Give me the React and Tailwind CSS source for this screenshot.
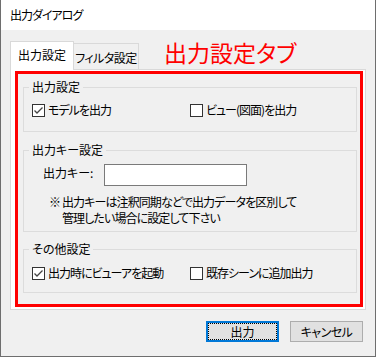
import React from "react";

function CheckBox({ checked, label, className = "" }) {
  return (
    <div className={"flex items-center h-[16px] " + className}>
      <span className="w-[13px] h-[13px] border border-[#333333] bg-white flex items-center justify-center shrink-0">
        {checked && (
          <svg width="11" height="11" viewBox="0 0 11 11">
            <polyline points="1.5,5.5 4,8 9.5,2.5" fill="none" stroke="#444444" strokeWidth="1.3" />
          </svg>
        )}
      </span>
      <span className="ml-[3px] whitespace-nowrap tracking-[-1px]">{label}</span>
    </div>
  );
}

function Group({ title, className = "", children }) {
  return (
    <fieldset className={"border border-[#dcdcdc] w-[334px] ml-[5px] " + className}>
      <legend className="ml-[5px] px-[3px] leading-[16px]">{title}</legend>
      {children}
    </fieldset>
  );
}

export default function App() {
  return (
    <div className="w-[377px] h-[357px] bg-white overflow-hidden font-['Noto_Sans_CJK_JP',sans-serif] [font-feature-settings:'palt'] text-[12px] text-black">
      <div className="w-[376px] h-[357px] border-l border-r border-b border-[#6e6e6e] flex flex-col">
        {/* タイトルバー */}
        <div className="h-[30px] bg-white pl-[9px] flex items-center shrink-0">
          <span className="tracking-[-1px]">出力ダイアログ</span>
        </div>

        {/* 本体 */}
        <div className="flex-1 bg-[#f0f0f0] pl-[9px] flex flex-col">
          {/* タブ */}
          <div className="mt-[11px] h-[29px] flex items-end">
            <div className="relative z-10 w-[64px] h-[29px] bg-white border-t border-l border-r border-[#d9d9d9] flex items-center justify-center pb-[3px]">
              出力設定
            </div>
            <div className="w-[65px] h-[26px] mb-[1px] bg-[#f0f0f0] border-t border-r border-[#d9d9d9] flex items-center justify-center pt-[2px] whitespace-nowrap tracking-[-0.5px]">
              フィルタ設定
            </div>
            <div className="ml-[25px] self-start -mt-[3px] h-[28px] leading-[28px] text-[23px] text-[#ff0000] whitespace-nowrap">
              出力設定タブ
            </div>
          </div>

          {/* タブページ */}
          <div className="-mt-px w-[356px] h-[241px] bg-white border border-[#d9d9d9]">
            <div className="mt-[1px] ml-[4px] w-[348px] h-[236px] border-[3px] border-[#ff0000] bg-[#f0f0f0]">
              <Group title="出力設定" className="mt-[5px]">
                <div className="pl-[8px] pt-[7px] pb-[13px] flex">
                  <CheckBox checked label="モデルを出力" className="w-[158px]" />
                  <CheckBox label="ビュー(図面)を出力" />
                </div>
              </Group>

              <Group title="出力キー設定" className="mt-[10px]">
                <div className="pl-[8px] pt-[6px] pb-[5px]">
                  <div className="flex items-center">
                    <span className="ml-[11px] w-[61px] mb-[4px] whitespace-nowrap">出力キー:</span>
                    <div className="w-[143px] h-[22px] border border-[#7a7a7a] bg-white" />
                  </div>
                  <div className="mt-[8px] ml-[17px] flex leading-[16px]">
                    <span className="w-[13px] shrink-0">※</span>
                    <div className="whitespace-nowrap tracking-[-0.9px]">
                      <div>出力キーは注釈同期などで出力データを区別して</div>
                      <div>管理したい場合に設定して下さい</div>
                    </div>
                  </div>
                </div>
              </Group>

              <Group title="その他設定" className="mt-[9px]">
                <div className="pl-[8px] pt-[8px] pb-[11px] flex">
                  <CheckBox checked label="出力時にビューアを起動" className="w-[158px]" />
                  <CheckBox label="既存シーンに追加出力" />
                </div>
              </Group>
            </div>
          </div>

          {/* ボタン */}
          <div className="mt-[11px] flex justify-end pr-[12px] gap-[11px]">
            <button className="w-[73px] h-[21px] border-2 border-[#0078d7] bg-[#e1e1e1] p-0">
              <div className="w-full h-full border border-dotted border-black flex items-center justify-center">
                出力
              </div>
            </button>
            <button className="w-[73px] h-[21px] border border-[#adadad] bg-[#e1e1e1] flex items-center justify-center tracking-[-0.5px]">
              キャンセル
            </button>
          </div>
        </div>
      </div>
    </div>
  );
}
